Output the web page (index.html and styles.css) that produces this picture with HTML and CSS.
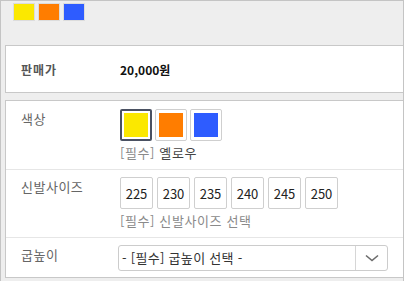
FILE: index.html
```html
<!DOCTYPE html>
<html lang="ko">
<head>
<meta charset="utf-8">
<link rel="stylesheet" href="styles.css">
</head>
<body>
<div class="frame">
  <div class="chips">
    <span class="chip yellow"></span>
    <span class="chip orange"></span>
    <span class="chip blue"></span>
  </div>
  <div class="box price-box">
    <div class="price-label">판매가</div>
    <div class="price-value">20,000원</div>
  </div>
  <div class="box options">
    <div class="row first">
      <div class="label">색상</div>
      <div class="value">
        <div class="swatches">
          <span class="swatch selected"><span class="fill yellow"></span></span>
          <span class="swatch"><span class="fill orange"></span></span>
          <span class="swatch"><span class="fill blue"></span></span>
        </div>
        <div class="note"><span class="req">[필수]</span> <span class="chosen">옐로우</span></div>
      </div>
    </div>
    <div class="row">
      <div class="label">신발사이즈</div>
      <div class="value">
        <div class="sizes">
          <span class="size">225</span>
          <span class="size">230</span>
          <span class="size">235</span>
          <span class="size">240</span>
          <span class="size">245</span>
          <span class="size">250</span>
        </div>
        <div class="note"><span class="req">[필수] 신발사이즈 선택</span></div>
      </div>
    </div>
    <div class="row last">
      <div class="label">굽높이</div>
      <div class="value">
        <div class="select">
          <span class="select-text">- [필수] 굽높이 선택 -</span>
          <span class="select-arrow">
            <svg width="14" height="8" viewBox="0 0 14 8"><path d="M1 1.5 L7 6.5 L13 1.5" fill="none" stroke="#6b6b6b" stroke-width="1.6"/></svg>
          </span>
        </div>
      </div>
    </div>
  </div>
</div>
</body>
</html>
```
FILE: styles.css
```css
* { box-sizing: border-box; }
html, body { margin: 0; padding: 0; }
body {
  font-family: "Noto Sans CJK KR", "Noto Sans", sans-serif;
  font-size: 13px;
  color: #333;
  background: #eeeeee;
  width: 404px;
  height: 281px;
  overflow: hidden;
}
.frame {
  width: 404px;
  height: 281px;
  background: #eeeeee;
  border: 1px solid #c4c4c4;
  border-bottom: none;
  padding: 2px 0 0 4px;
}
.chips {
  display: flex;
  gap: 3px;
  margin-left: 8px;
  height: 18px;
  margin-bottom: 24px;
}
.chip {
  width: 22px;
  height: 18px;
  border: 1px solid #dcdcdc;
}
.yellow { background: #fbe800; }
.orange { background: #ff7d00; }
.blue { background: #2e5cff; }
.box {
  background: #fff;
  border: 1px solid #c8c8c8;
  border-right: none;
}
.price-box {
  height: 48px;
  display: flex;
  align-items: center;
  padding-left: 15px;
  margin-bottom: 7px;
  font-weight: bold;
  font-size: 12px;
}
.price-label { width: 99px; color: #555; letter-spacing: 1px; }
.price-value { color: #111; }
.row {
  display: flex;
  padding: 7px 15px 8px 15px;
  border-bottom: 1px solid #e6e6e6;
}
.row.first { padding-top: 8px; }
.row.last { border-bottom: none; padding-bottom: 6px; }
.label {
  width: 99px;
  color: #666;
  line-height: 20px;
  letter-spacing: 0.5px;
}
.value { flex: 1; }
.swatches { display: flex; gap: 3px; }
.swatch {
  width: 32px;
  height: 32px;
  border: 1px solid #cfcfcf;
  border-radius: 2px;
  padding: 3px;
  background: #fff;
}
.swatch.selected {
  border: 2px solid #4a5162;
  padding: 2px;
}
.fill { display: block; width: 100%; height: 100%; }
.note {
  margin-top: 4px;
  line-height: 16px;
  font-size: 13px;
  letter-spacing: 0.6px;
}
.req { color: #8a8a8a; }
.chosen { color: #444; }
.sizes { display: flex; gap: 4px; }
.size {
  width: 33px;
  height: 32px;
  border: 1px solid #cfcfcf;
  border-radius: 2px;
  display: flex;
  align-items: center;
  justify-content: center;
  color: #222;
  font-size: 13px;
}
.select {
  width: 270px;
  height: 26px;
  border: 1px solid #cccccc;
  border-radius: 3px;
  display: flex;
  align-items: center;
}
.select-text {
  flex: 1;
  padding-left: 3px;
  color: #333;
  line-height: 24px;
  letter-spacing: 0.3px;
}
.select-arrow {
  width: 32px;
  height: 24px;
  border-left: 1px solid #d6d6d6;
  display: flex;
  align-items: center;
  justify-content: center;
}
```
